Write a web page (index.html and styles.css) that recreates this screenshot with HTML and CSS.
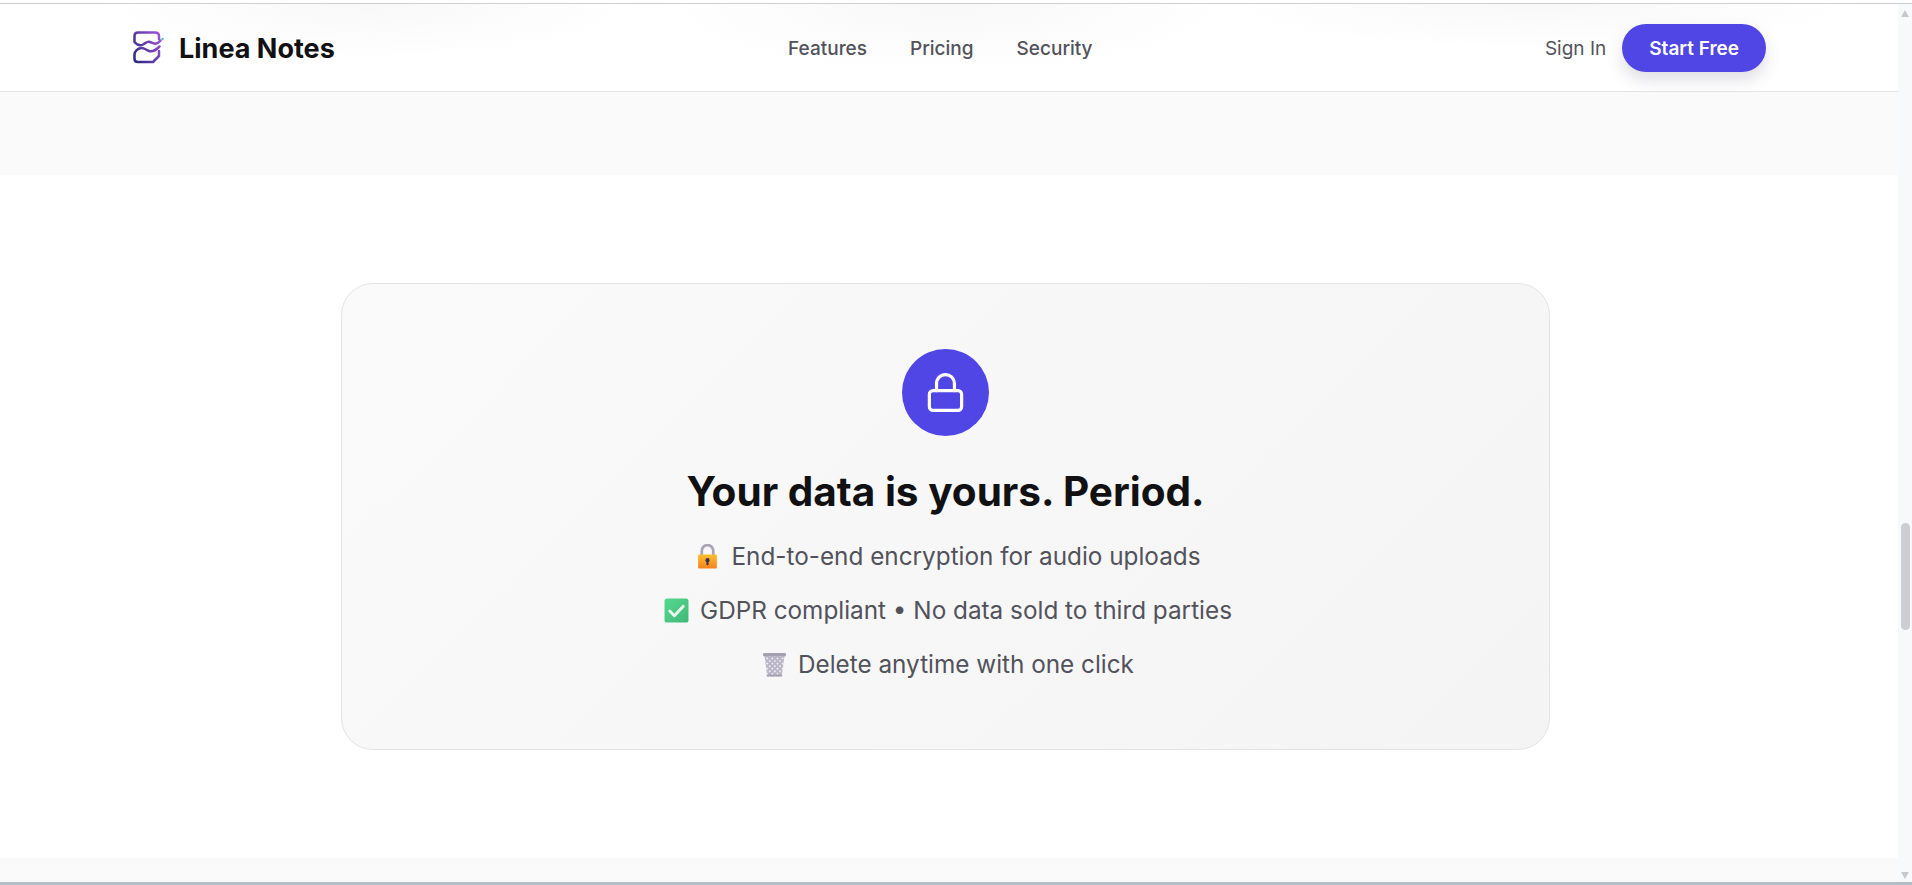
FILE: index.html
```html
<!DOCTYPE html>
<html lang="en">
<head>
    <meta charset="UTF-8">
    <meta name="viewport" content="width=device-width, initial-scale=1.0">
    <title>Linea Notes</title>
    <link rel="stylesheet" href="styles.css">
</head>
<body>
    <div class="top-edge"></div>

    <div class="window">
        <div class="page">
            <!-- Header -->
            <header class="header">
                <a class="brand" href="#">
                    <svg class="brand-logo" viewBox="0 0 32 33" fill="none" stroke-width="2.500" stroke-linecap="round" stroke-linejoin="round">
                        <defs>
                            <linearGradient id="logo-grad" gradientUnits="userSpaceOnUse" x1="0" y1="26" x2="30" y2="8">
                                <stop offset="0" stop-color="#2c2a7e"/>
                                <stop offset="1" stop-color="#a052dc"/>
                            </linearGradient>
                        </defs>
                        <path stroke="url(#logo-grad)" d="M26 8V5Q26 1.500 22 1.500H5Q1.500 1.500 1.500 5V11C4 14 7 15 10 13.500S14 10 17 11S23 15 27.500 9.500"/>
                        <path stroke="url(#logo-grad)" d="M26.500 15.500C22 20 19 21 16 20S11 16.500 8 17S1.500 20 1.500 23.500V28Q1.500 31 5 31H20L26 25V20"/>
                        <circle cx="29.500" cy="8" r="1.200" fill="#3cc9a0"/>
                    </svg>
                    <span class="brand-name">Linea Notes</span>
                </a>
                <nav class="nav">
                    <a href="#">Features</a>
                    <a href="#">Pricing</a>
                    <a href="#">Security</a>
                </nav>
                <div class="header-actions">
                    <a class="sign-in" href="#">Sign In</a>
                    <a class="start-btn" href="#">Start Free</a>
                </div>
            </header>

            <div class="band band-top"></div>

            <!-- Security section -->
            <section class="security">
                <div class="security-card">
                    <div class="lock-circle">
                        <svg viewBox="0 0 24 24" fill="none" stroke="#fff" stroke-width="1.800" stroke-linecap="round" stroke-linejoin="round">
                            <rect x="3" y="11" width="18" height="11" rx="2"/>
                            <path d="M7 11V7a5 5 0 0 1 10 0v4"/>
                        </svg>
                    </div>
                    <h2>Your data is yours. Period.</h2>
                    <ul class="security-list">
                        <li>
                            <svg class="emoji" viewBox="0 0 24 24">
                                <defs>
                                    <linearGradient id="lock-body" x1="0" y1="0" x2="0" y2="1">
                                        <stop offset="0" stop-color="#fcc02e"/>
                                        <stop offset="1" stop-color="#f5811f"/>
                                    </linearGradient>
                                </defs>
                                <path d="M6.500 11V6.500a5.500 5.500 0 0 1 11 0V11" fill="none" stroke="#a9a4b5" stroke-width="2.600"/>
                                <rect x="3" y="10" width="18" height="13.500" rx="1" fill="url(#lock-body)"/>
                                <circle cx="12" cy="15.500" r="2" fill="#37324a"/>
                                <rect x="11" y="15.500" width="2" height="5" rx="0.800" fill="#37324a"/>
                            </svg>
                            <span>End-to-end encryption for audio uploads</span>
                        </li>
                        <li>
                            <svg class="emoji" viewBox="0 0 24 24">
                                <defs>
                                    <linearGradient id="check-box" x1="0" y1="0" x2="1" y2="1">
                                        <stop offset="0" stop-color="#56d98f"/>
                                        <stop offset="1" stop-color="#3fb878"/>
                                    </linearGradient>
                                </defs>
                                <rect x="0.500" y="0.500" width="23" height="23" rx="2.500" fill="url(#check-box)"/>
                                <path d="M5.500 12.500l4.500 4.500L18.500 8" fill="none" stroke="#eafaf0" stroke-width="2.800" stroke-linecap="round" stroke-linejoin="round"/>
                            </svg>
                            <span>GDPR compliant • No data sold to third parties</span>
                        </li>
                        <li>
                            <svg class="emoji" viewBox="0 0 24 24">
                                <defs>
                                    <pattern id="bin-mesh" width="3.500" height="3.500" patternUnits="userSpaceOnUse" patternTransform="rotate(45)">
                                        <rect width="3.500" height="3.500" fill="#b9b5c6"/>
                                        <rect width="1.700" height="1.700" fill="#eceaf0"/>
                                    </pattern>
                                </defs>
                                <path d="M2.500 4L5 23.500H19L21.500 4Z" fill="url(#bin-mesh)"/>
                                <rect x="1" y="1" width="22" height="3.200" rx="1" fill="#a5a1b2"/>
                                <rect x="4.500" y="21.500" width="15" height="2" rx="0.800" fill="#a5a1b2"/>
                            </svg>
                            <span>Delete anytime with one click</span>
                        </li>
                    </ul>
                </div>
            </section>

            <div class="band band-bottom"></div>
        </div>

        <!-- Scrollbar -->
        <div class="scrollbar">
            <span class="arrow arrow-up"></span>
            <span class="thumb"></span>
            <span class="arrow arrow-down"></span>
        </div>
    </div>

    <div class="bottom-edge"></div>
</body>
</html>
```

FILE: styles.css
```css
/* Basic reset */
* {
    margin: 0;
    padding: 0;
    box-sizing: border-box;
}
body {
    height: 885px;
    overflow: hidden;
    font-family: Inter, "Liberation Sans", sans-serif;
    background: #fff;
    color: #111114;
}
a {
    text-decoration: none;
    color: inherit;
}
.top-edge {
    height: 4px;
    background: #fff;
    border-bottom: 1px solid #cfcfcf;
}
.window {
    display: flex;
    height: 878px;
}
.page {
    flex: 1;
    display: flex;
    flex-direction: column;
}
/* Header */
.header {
    height: 88px;
    padding: 0 132px 0 133px;
    display: flex;
    align-items: center;
    justify-content: space-between;
    background:
        radial-gradient(ellipse 270px 55px at 370px 0, #f8f8f8, rgba(255, 255, 255, 0)),
        radial-gradient(ellipse 290px 70px at 945px 0, #f8f8f8, rgba(255, 255, 255, 0)),
        radial-gradient(ellipse 320px 45px at 1540px 0, #f8f8f8, rgba(255, 255, 255, 0)),
        #fff;
    border-bottom: 1px solid #e5e5e5;
}
.brand {
    display: flex;
    align-items: center;
    gap: 14px;
}
.brand-logo {
    width: 32px;
    height: 33px;
}
.brand-name {
    padding-top: 1px;
    font-size: 27px;
    font-weight: 700;
}
.nav {
    display: flex;
    gap: 43px;
    margin-left: 1px;
    padding-top: 1px;
}
.nav a, .sign-in {
    font-size: 19px;
    font-weight: 500;
    color: #52525b;
}
.sign-in {
    padding-top: 1px;
    font-weight: 400;
}
.header-actions {
    display: flex;
    align-items: center;
    gap: 16px;
}
.start-btn {
    display: flex;
    align-items: center;
    height: 48px;
    padding: 1px 27px 0;
    border-radius: 24px;
    background: #4f46e5;
    color: #fff;
    font-size: 19px;
    font-weight: 600;
    box-shadow: 0 8px 16px rgba(79, 70, 100, 0.18);
}
/* Grey bands above and below */
.band {
    background: #fafafa;
}
.band-top {
    height: 83px;
}
.band-bottom {
    flex: 1;
}
/* Security section */
.security {
    padding: 108px 348px 108px 341px;
    background: #fff;
}
.security-card {
    height: 467px;
    padding-top: 65px;
    display: flex;
    flex-direction: column;
    align-items: center;
    border: 1px solid #e4e4e7;
    border-radius: 32px;
    background: linear-gradient(135deg, #fafafa, #f4f4f5);
}
.lock-circle {
    width: 87px;
    height: 87px;
    border-radius: 50%;
    background: #4f46e5;
    display: flex;
    align-items: center;
    justify-content: center;
}
.lock-circle svg {
    width: 43px;
    height: 43px;
}
.security-card h2 {
    margin-top: 30px;
    font-size: 40.500px;
    font-weight: 700;
    line-height: 52px;
}
.security-list {
    margin-top: 11px;
    padding-left: 5px;
    list-style: none;
}
.security-list li {
    display: flex;
    align-items: center;
    justify-content: center;
    gap: 11px;
    height: 54px;
    font-size: 24.300px;
    color: #52525b;
}
.emoji {
    width: 25px;
    height: 25px;
}
/* Scrollbar */
.scrollbar {
    position: relative;
    width: 14px;
    background: #f8f9fb;
}
.thumb {
    position: absolute;
    top: 519px;
    left: 3px;
    width: 9px;
    height: 107px;
    border-radius: 5px;
    background: #cdcdd2;
}
.arrow {
    position: absolute;
    left: 3px;
    width: 0;
    height: 0;
    border-left: 4.500px solid transparent;
    border-right: 4.500px solid transparent;
}
.arrow-up {
    top: 6px;
    border-bottom: 7px solid #c8c8cc;
}
.arrow-down {
    bottom: 3px;
    border-top: 7px solid #c8c8cc;
}
.bottom-edge {
    height: 3px;
    background: #b4bdc2;
}
```
